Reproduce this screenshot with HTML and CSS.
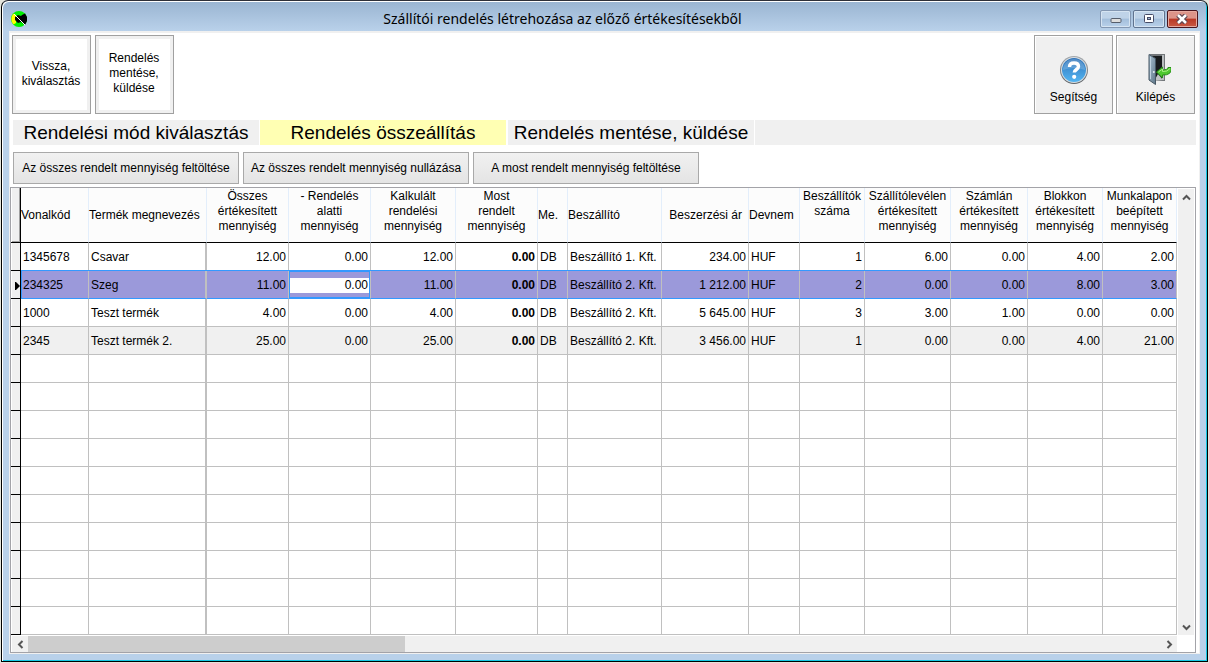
FILE: index.html
```
<!DOCTYPE html>
<html lang="hu">
<head>
<meta charset="utf-8">
<title>Szállítói rendelés létrehozása az előző értékesítésekből</title>
<link rel="stylesheet" href="styles.css">
</head>
<body>
<div class="window">
  <header class="titlebar">
    <svg class="app-icon" width="16" height="16" viewBox="0 0 16 16" aria-hidden="true">
      <circle cx="8" cy="8" r="8" fill="#00f000"/>
      <path d="M2.500 2.500A8 8 0 0 0 2.500 13.500L5 12V4z" fill="#ff0"/>
      <path d="M4 6l3-2 3 1 1-1 3-1.500 2 3.500v4l-2 4-4-3-3 1-3-3z" fill="#000"/>
      <path d="M3 3l11 11" stroke="#fff" stroke-width="1"/>
    </svg>
    <h1 class="title">Szállítói rendelés létrehozása az előző értékesítésekből</h1>
    <div class="window-buttons">
      <button class="wbtn" type="button" aria-label="Kis méret"><svg width="12" height="10" viewBox="0 0 12 10"><rect x="1" y="4.500" width="10" height="4" rx="1" fill="#ddd" stroke="#555d6b"/></svg></button>
      <button class="wbtn" type="button" aria-label="Teljes méret"><svg width="12" height="10" viewBox="0 0 12 10"><rect x="1.500" y=".5" width="9" height="8" rx="1" fill="#fff" stroke="#454b66"/><rect x="4.500" y="3.500" width="3" height="2" fill="#9fb6d4" stroke="#454b66"/></svg></button>
      <button class="wbtn wbtn-close" type="button" aria-label="Bezárás"><svg width="12" height="10" viewBox="0 0 12 10"><path d="M2 1l8 8M10 1l-8 8" stroke="#5d4550" stroke-width="5"/><path d="M2 1l8 8M10 1l-8 8" stroke="#fff" stroke-width="2.500"/></svg></button>
    </div>
  </header>
  <main class="content">
    <div class="toolbar">
      <button class="tool tool-plain" type="button">Vissza,<br>kiválasztás</button>
      <button class="tool tool-plain" type="button">Rendelés<br>mentése,<br>küldése</button>
      <span class="spacer"></span>
      <button class="tool tool-icon" type="button">
        <svg width="30" height="30" viewBox="0 0 30 30" aria-hidden="true">
          <defs><linearGradient id="blue" x1="0" y1="0" x2="0" y2="1"><stop offset="0" stop-color="#2f72b8"/><stop offset="1" stop-color="#53b5f2"/></linearGradient>
          <linearGradient id="rim" x1="0" y1="0" x2="0" y2="1"><stop offset="0" stop-color="#a5a9ad"/><stop offset="1" stop-color="#5d6266"/></linearGradient></defs>
          <circle cx="15" cy="14" r="14" fill="url(#rim)"/>
          <circle cx="15" cy="14" r="13" fill="#d9dee2"/>
          <circle cx="15" cy="14" r="12" fill="url(#blue)"/>
          <path d="M4 14a11 11 0 0 1 22 0Q15 10 4 14z" fill="#fff" opacity=".18"/>
          <path d="M10.500 11Q10.500 7 15 7T19.500 10.500C19.500 13.500 15.300 13.500 15.300 16.500" fill="none" stroke="#fff" stroke-width="3.400"/>
          <circle cx="15.200" cy="20.800" r="2.100" fill="#fff"/>
        </svg>
        <span>Segítség</span>
      </button>
      <button class="tool tool-icon" type="button">
        <svg width="30" height="32" viewBox="0 0 30 32" aria-hidden="true">
          <defs><linearGradient id="door" x1="0" y1="0" x2="1" y2="1"><stop offset="0" stop-color="#a9c0d0"/><stop offset="1" stop-color="#5e7689"/></linearGradient></defs>
          <path d="M8 0h16v27H12V3z" fill="#727679"/>
          <path d="M10 2h12v23H10z" fill="#181b1d"/>
          <path d="M22 1v25" stroke="#b9bdbf" stroke-width="2"/>
          <path d="M13 27l4-7 5 6z" fill="#bfc3c5"/>
          <path d="M8 0.500l6.500 4v26L8 26z" fill="url(#door)" stroke="#465764"/>
          <path d="M9.500 3v22" stroke="#c0d2df"/>
          <circle cx="12.800" cy="18" r="1" fill="#e5edf3"/>
          <path d="M15.500 18l6-5v3q5 0 5.500-2.500h3.500q.5 8-9 7.500v3z" fill="#4fc831" stroke="#278e18"/>
          <path d="M17.500 18l4-3v2.500q5 .5 7.500-3" fill="none" stroke="#a7ef83"/>
        </svg>
        <span>Kilépés</span>
      </button>
    </div>
    <nav class="steps">
      <a class="step" href="#mod">Rendelési mód kiválasztás</a>
      <a class="step step-active" href="#osszeallitas" aria-current="step">Rendelés összeállítás</a>
      <a class="step step-last" href="#mentes">Rendelés mentése, küldése</a>
      <span class="step-rest"></span>
    </nav>
    <div class="actions">
      <button class="action" type="button">Az összes rendelt mennyiség feltöltése</button>
      <button class="action" type="button">Az összes rendelt mennyiség nullázása</button>
      <button class="action" type="button">A most rendelt mennyiség feltöltése</button>
    </div>
    <section class="grid">
      <div class="grid-view">
        <table class="data">
          <colgroup>
            <col class="w-mark"><col class="w-code"><col class="w-name"><col class="w-sum"><col class="w-sum"><col class="w-calc"><col class="w-sum"><col class="w-unit"><col class="w-supplier"><col class="w-price"><col class="w-currency"><col class="w-count"><col class="w-delivery"><col class="w-invoice"><col class="w-receipt"><col class="w-sheet"><col>
          </colgroup>
          <thead>
            <tr>
              <th class="mark"></th>
              <th class="left">Vonalkód</th>
              <th class="left frozen">Termék megnevezés</th>
              <th class="multi">Összes<br>értékesített<br>mennyiség</th>
              <th class="multi">- Rendelés<br>alatti<br>mennyiség</th>
              <th class="multi">Kalkulált<br>rendelési<br>mennyiség</th>
              <th class="multi">Most<br>rendelt<br>mennyiség</th>
              <th class="left">Me.</th>
              <th class="left">Beszállító</th>
              <th class="right">Beszerzési ár</th>
              <th class="left">Devnem</th>
              <th class="multi">Beszállítók<br>száma</th>
              <th class="multi">Szállítólevélen<br>értékesített<br>mennyiség</th>
              <th class="multi">Számlán<br>értékesített<br>mennyiség</th>
              <th class="multi">Blokkon<br>értékesített<br>mennyiség</th>
              <th class="multi">Munkalapon<br>beépített<br>mennyiség</th>
              <th class="end"></th>
            </tr>
          </thead>
          <tbody>
            <tr><td class="mark"></td><td>1345678</td><td class="frozen">Csavar</td><td class="num">12.00</td><td class="num">0.00</td><td class="num">12.00</td><td class="num strong">0.00</td><td>DB</td><td>Beszállító 1. Kft.</td><td class="num">234.00</td><td>HUF</td><td class="num">1</td><td class="num">6.00</td><td class="num">0.00</td><td class="num">4.00</td><td class="num">2.00</td><td class="end"></td></tr>
            <tr class="selected"><td class="mark"><svg class="pointer" width="5" height="8" viewBox="0 0 5 8" aria-hidden="true"><path d="M0 0h1l4 4-4 4H0z"/></svg></td><td>234325</td><td class="frozen">Szeg</td><td class="num">11.00</td><td class="num editing"><input class="cell-input" type="text" value="0.00" aria-label="Rendelés alatti mennyiség"></td><td class="num">11.00</td><td class="num strong">0.00</td><td>DB</td><td>Beszállító 2. Kft.</td><td class="num">1 212.00</td><td>HUF</td><td class="num">2</td><td class="num">0.00</td><td class="num">0.00</td><td class="num">8.00</td><td class="num">3.00</td><td class="end"></td></tr>
            <tr><td class="mark"></td><td>1000</td><td class="frozen">Teszt termék</td><td class="num">4.00</td><td class="num">0.00</td><td class="num">4.00</td><td class="num strong">0.00</td><td>DB</td><td>Beszállító 2. Kft.</td><td class="num">5 645.00</td><td>HUF</td><td class="num">3</td><td class="num">3.00</td><td class="num">1.00</td><td class="num">0.00</td><td class="num">0.00</td><td class="end"></td></tr>
            <tr class="alt"><td class="mark"></td><td>2345</td><td class="frozen">Teszt termék 2.</td><td class="num">25.00</td><td class="num">0.00</td><td class="num">25.00</td><td class="num strong">0.00</td><td>DB</td><td>Beszállító 2. Kft.</td><td class="num">3 456.00</td><td>HUF</td><td class="num">1</td><td class="num">0.00</td><td class="num">0.00</td><td class="num">4.00</td><td class="num">21.00</td><td class="end"></td></tr>
            <tr><td class="mark"></td><td></td><td class="frozen"></td><td></td><td></td><td></td><td></td><td></td><td></td><td></td><td></td><td></td><td></td><td></td><td></td><td></td><td class="end"></td></tr>
            <tr><td class="mark"></td><td></td><td class="frozen"></td><td></td><td></td><td></td><td></td><td></td><td></td><td></td><td></td><td></td><td></td><td></td><td></td><td></td><td class="end"></td></tr>
            <tr><td class="mark"></td><td></td><td class="frozen"></td><td></td><td></td><td></td><td></td><td></td><td></td><td></td><td></td><td></td><td></td><td></td><td></td><td></td><td class="end"></td></tr>
            <tr><td class="mark"></td><td></td><td class="frozen"></td><td></td><td></td><td></td><td></td><td></td><td></td><td></td><td></td><td></td><td></td><td></td><td></td><td></td><td class="end"></td></tr>
            <tr><td class="mark"></td><td></td><td class="frozen"></td><td></td><td></td><td></td><td></td><td></td><td></td><td></td><td></td><td></td><td></td><td></td><td></td><td></td><td class="end"></td></tr>
            <tr><td class="mark"></td><td></td><td class="frozen"></td><td></td><td></td><td></td><td></td><td></td><td></td><td></td><td></td><td></td><td></td><td></td><td></td><td></td><td class="end"></td></tr>
            <tr><td class="mark"></td><td></td><td class="frozen"></td><td></td><td></td><td></td><td></td><td></td><td></td><td></td><td></td><td></td><td></td><td></td><td></td><td></td><td class="end"></td></tr>
            <tr><td class="mark"></td><td></td><td class="frozen"></td><td></td><td></td><td></td><td></td><td></td><td></td><td></td><td></td><td></td><td></td><td></td><td></td><td></td><td class="end"></td></tr>
            <tr><td class="mark"></td><td></td><td class="frozen"></td><td></td><td></td><td></td><td></td><td></td><td></td><td></td><td></td><td></td><td></td><td></td><td></td><td></td><td class="end"></td></tr>
            <tr><td class="mark"></td><td></td><td class="frozen"></td><td></td><td></td><td></td><td></td><td></td><td></td><td></td><td></td><td></td><td></td><td></td><td></td><td></td><td class="end"></td></tr>
          </tbody>
        </table>
      </div>
      <div class="vscroll">
        <button class="arrow" type="button" aria-label="Fel"><svg width="9" height="7" viewBox="0 0 9 7"><path d="M1 5.500l3.500-3.500L8 5.500"/></svg></button>
        <button class="arrow" type="button" aria-label="Le"><svg width="9" height="7" viewBox="0 0 9 7"><path d="M1 1.500L4.500 5 8 1.500"/></svg></button>
      </div>
      <div class="hscroll">
        <button class="arrow" type="button" aria-label="Balra"><svg width="7" height="9" viewBox="0 0 7 9"><path d="M5.500 1L2 4.500 5.500 8"/></svg></button>
        <div class="track"><div class="thumb"></div></div>
        <button class="arrow" type="button" aria-label="Jobbra"><svg width="7" height="9" viewBox="0 0 7 9"><path d="M1.500 1L5 4.500 1.500 8"/></svg></button>
      </div>
    </section>
  </main>
</div>
</body>
</html>
```
FILE: styles.css
```
* { box-sizing: border-box; }

body {
  margin: 0;
  background: #e4e4dc;
  color: #000;
  font: 12px/15px "Liberation Sans", Arial, sans-serif;
}

button, input { font: inherit; color: inherit; }

.window {
  display: flex;
  flex-direction: column;
  min-height: calc(100vh - 1px);
  margin: 0 1px 1px;
  padding: 0 7px 7px;
  border: 1px solid #000;
  border-top-color: #2d2f38;
  border-radius: 7px 7px 0 0;
  background: linear-gradient(#99b4d1, #b9d1ea 30px);
  box-shadow: inset 1px 1px #fff, inset -1px -1px #15c8e4;
}

.titlebar {
  display: grid;
  grid-template-columns: 16px 1fr 100px;
  align-items: center;
  height: 30px;
  padding-top: 6px;
}

.app-icon { margin-left: 2px; }

.title {
  margin: 0;
  font: 14px/20px "Noto Sans", "Open Sans", sans-serif;
  text-align: center;
}

.window-buttons {
  display: flex;
  justify-content: flex-end;
  gap: 2px;
  padding-right: 2px;
}

.wbtn {
  display: grid;
  place-items: center;
  width: 32px;
  height: 18px;
  padding: 0;
  border: 1px solid #60738f;
  border-radius: 2px;
  background: linear-gradient(#bfd3e8 45%, #a3bedb 50%, #b9d1ea);
  box-shadow: inset 0 0 0 1px #d6e4f2;
}

.wbtn:first-child { border-color: #8397b2; }

.wbtn-close {
  border-color: #49151e;
  background: linear-gradient(#dc9489 45%, #b93825 50%, #c95a45);
  box-shadow: inset 0 0 0 1px #e5a99f;
}

.content {
  flex: 1;
  display: flex;
  flex-direction: column;
  padding: 2px 1px 0 0;
  border: 1px solid #f0f0f0;
  border-top-width: 2px;
  background: #fff;
}

.toolbar {
  display: flex;
  gap: 3px;
  padding: 0 3px 0 2px;
}

.spacer { flex: 1; }

.tool {
  width: 79px;
  height: 79px;
  padding: 0 1px 2px 0;
  border: 1px solid #a0a0a0;
  background: #f0f0f0;
}

.tool-plain {
  background: #fff;
  box-shadow: inset 0 0 0 3px #f0f0f0;
}

.tool:nth-child(2) { margin-left: 1px; }

.tool-icon {
  display: flex;
  flex-direction: column;
  align-items: center;
  justify-content: flex-end;
  gap: 4px;
  padding: 0 0 8px;
  box-shadow: inset 1px 1px #fff;
}

.steps {
  display: grid;
  grid-template-columns: 246px 246px 247px 1fr;
  gap: 1px;
  margin: 6px 2px 0 3px;
  font-size: 19px;
  line-height: 25px;
}

.step {
  height: 25px;
  background: #f0f0f0;
  color: #000;
  text-align: center;
  text-decoration: none;
  white-space: nowrap;
}

.step-active { background: #ffffb3; }
.step-last { margin-left: 1px; }
.step-rest { background: #f0f0f0; }

.actions {
  display: flex;
  gap: 4px;
  margin: 7px 2px 3px 3px;
}

.action {
  width: 226px;
  height: 32px;
  padding: 0;
  border: 1px solid #a9a9a9;
  background: linear-gradient(#f1f1f1, #e4e4e4);
  white-space: nowrap;
}

.grid {
  flex: 1;
  display: grid;
  grid-template-columns: minmax(0, 1fr) 18px;
  grid-template-rows: 1fr 17px;
  margin-right: 2px;
  border: 1px solid #a3a3a8;
}

.grid-view { overflow: hidden; }

.data {
  width: 100%;
  table-layout: fixed;
  border-collapse: separate;
  border-spacing: 0;
}

.w-mark { width: 10px; }
.w-code { width: 68px; }
.w-name { width: 118px; }
.w-sum { width: 82px; }
.w-calc { width: 85px; }
.w-unit { width: 30px; }
.w-supplier { width: 94px; }
.w-price { width: 87px; }
.w-currency { width: 51px; }
.w-count { width: 65px; }
.w-delivery { width: 86px; }
.w-invoice { width: 77px; }
.w-receipt { width: 75px; }
.w-sheet { width: 74px; }

th {
  height: 55px;
  padding: 0;
  border-right: 1px solid #e3eefb;
  border-bottom: 1px solid #000;
  background: #fcfcfc;
  font-weight: normal;
  white-space: nowrap;
}

.left { text-align: left; }
.right { padding-right: 6px; text-align: right; }
.multi { padding-top: 1px; vertical-align: top; text-align: center; }

td {
  height: 28px;
  padding: 2px 2px 0;
  border-right: 1px solid #c0c0c0;
  border-bottom: 1px solid #c0c0c0;
  white-space: nowrap;
}

td.frozen { border-right-width: 2px; }

.num { text-align: right; }
.strong { font-weight: bold; }

.mark {
  padding: 2px 0 0;
  border-right: 1px solid #000;
  border-bottom: 1px solid #000;
  background: #f0f0f0;
  box-shadow: inset 1px 0 #fff;
  text-align: right;
}

th.mark { box-shadow: inset 1px 0 #fff, inset -1px -1px #a0a0a0; }

.end { padding: 0; border-right: 0; }

.alt td { background: #f0f0f0; }

.selected td:not(.mark) {
  border-bottom-color: #3399ff;
  background: #9b99da;
  box-shadow: 0 -1px #3399ff;
}

.selected td.end { box-shadow: 0 -1px #3399ff, inset -1px 0 #3399ff; }
.selected td.mark + td { box-shadow: 0 -1px #3399ff, inset 1px 0 #3399ff; }

.selected td.editing {
  padding: 1px 1px 0;
  box-shadow: 0 -1px #3399ff, inset 0 0 0 1px #3399ff;
}

.pointer { display: block; margin-left: auto; }

.cell-input {
  display: block;
  width: 100%;
  height: 15px;
  padding: 1px 1px 0;
  border: 0;
  outline: 0;
  background: #fff;
  text-align: right;
}

.vscroll {
  display: flex;
  flex-direction: column;
  justify-content: space-between;
  margin: 1px 1px 0;
  background: #f0f0f0;
}

.hscroll {
  display: flex;
  margin: 1px 0 0 1px;
  background: #f0f0f0;
}

.track { flex: 1; }

.thumb {
  width: 33.3%;
  height: 100%;
  background: #cdcdcd;
}

.arrow {
  display: grid;
  place-items: center;
  width: 16px;
  height: 16px;
  padding: 0;
  border: 0;
  background: none;
}

.arrow path {
  fill: none;
  stroke: #555;
  stroke-width: 2;
}
```
